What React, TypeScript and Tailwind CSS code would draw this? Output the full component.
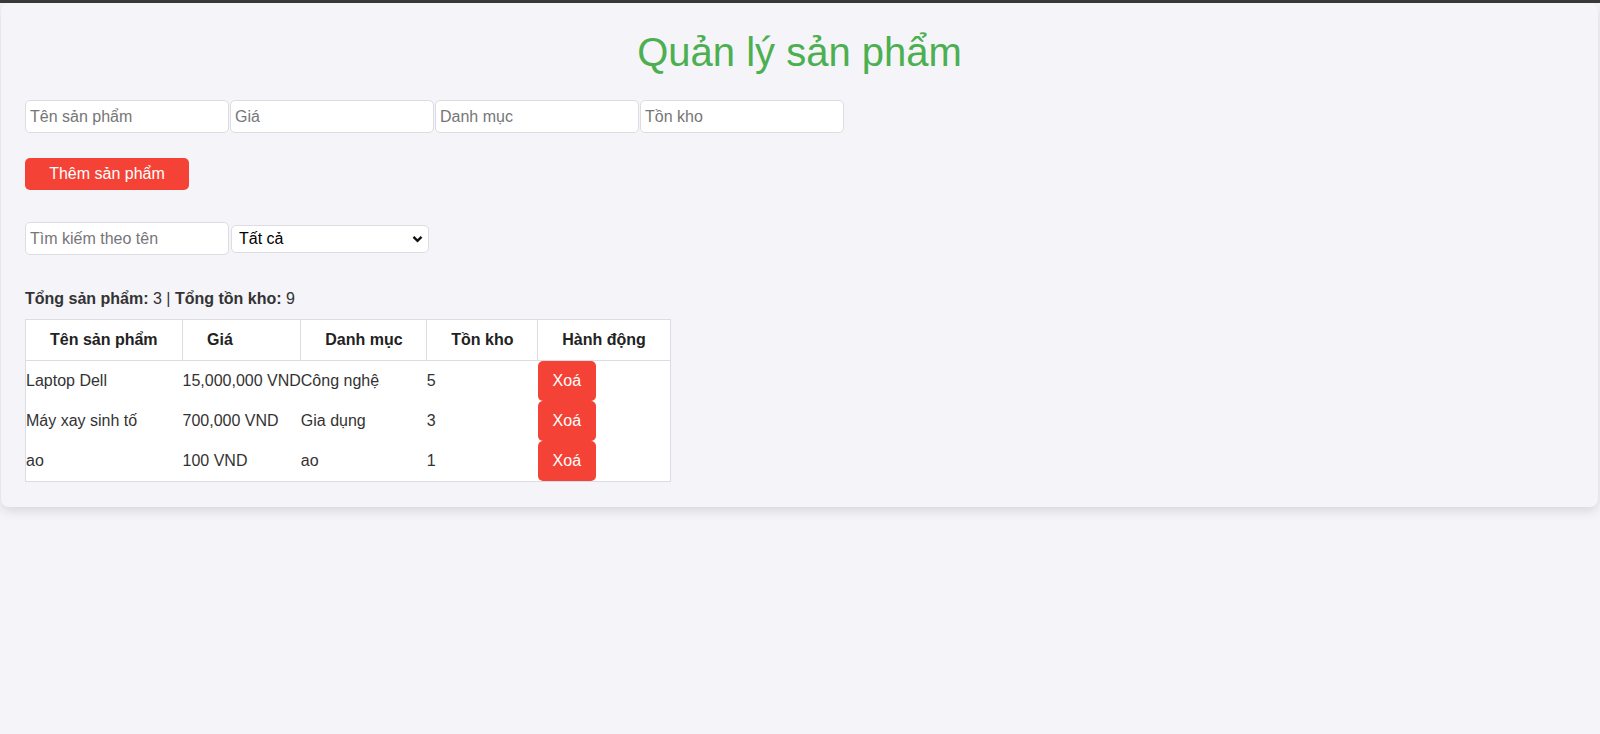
import { useState } from 'react'

interface Product {
  name: string
  price: number
  category: string
  stock: number
}

const initialProducts: Product[] = [
  { name: 'Laptop Dell', price: 15000000, category: 'Công nghệ', stock: 5 },
  { name: 'Máy xay sinh tố', price: 700000, category: 'Gia dụng', stock: 3 },
  { name: 'ao', price: 100, category: 'ao', stock: 1 },
]

const inputCls =
  'h-[33px] w-[204px] rounded-[5px] border border-[#dcdce2] bg-white px-1 text-base text-[#333] outline-none placeholder:text-[#767676]'

export default function App() {
  const [products, setProducts] = useState<Product[]>(initialProducts)
  const totalStock = products.reduce((s, p) => s + p.stock, 0)

  return (
    <div className="min-h-screen bg-[#f4f4f9] font-['Liberation_Sans',Arial,sans-serif] text-[#333]">
      <div className="h-[3px] bg-[#3a3a3a]" />

      {/* khung chính */}
      <div className="ml-px mr-[2px] rounded-lg bg-[#f4f4f9] px-6 pt-[26px] pb-[25px] shadow-[0_4px_12px_rgba(0,0,0,0.12)]">
        <h1 className="text-center text-[40px] leading-[46px] text-[#4caf50]">Quản lý sản phẩm</h1>

        <div className="mt-[25px] flex gap-px">
          <input className={inputCls} placeholder="Tên sản phẩm" />
          <input className={inputCls} placeholder="Giá" />
          <input className={inputCls} placeholder="Danh mục" />
          <input className={inputCls} placeholder="Tồn kho" />
        </div>

        <button className="mt-[25px] h-8 w-[164px] rounded-[5px] bg-[#f44336] text-base text-white">
          Thêm sản phẩm
        </button>

        <div className="mt-8 flex items-center gap-[2px]">
          <input className={inputCls} placeholder="Tìm kiếm theo tên" />
          <div className="relative">
            <select className="h-[28px] w-[198px] appearance-none rounded-[5px] border border-[#dcdce2] bg-white pl-[7px] text-base text-black outline-none">
              <option>Tất cả</option>
              <option>Công nghệ</option>
              <option>Gia dụng</option>
            </select>
            <svg
              className="pointer-events-none absolute right-[6px] top-[10px]"
              width="11"
              height="8"
              viewBox="0 0 11 8"
            >
              <path d="M1.5 1.8 5.5 5.8 9.5 1.8" fill="none" stroke="#111" strokeWidth="2.4" />
            </svg>
          </div>
        </div>

        <p className="mt-[35px] leading-[18px]">
          <b>Tổng sản phẩm:</b> {products.length} | <b>Tổng tồn kho:</b> {totalStock}
        </p>

        <table className="mt-[11px] table-fixed border-collapse border border-[#dcdce2] bg-white">
          <colgroup>
            <col className="w-[157px]" />
            <col className="w-[118px]" />
            <col className="w-[126px]" />
            <col className="w-[111px]" />
            <col className="w-[133px]" />
          </colgroup>
          <thead>
            <tr>
              {['Tên sản phẩm', 'Giá', 'Danh mục', 'Tồn kho', 'Hành động'].map((h) => (
                <th
                  key={h}
                  className="whitespace-nowrap border border-[#dcdce2] pl-6 pr-0 py-[11px] text-left font-bold leading-[18px] text-[#222]"
                >
                  {h}
                </th>
              ))}
            </tr>
          </thead>
          <tbody>
            {products.map((p, i) => (
              <tr key={i}>
                <td className="p-0 whitespace-nowrap">{p.name}</td>
                <td className="p-0 whitespace-nowrap">{p.price.toLocaleString('en-US')} VND</td>
                <td className="p-0 whitespace-nowrap">{p.category}</td>
                <td className="p-0">{p.stock}</td>
                <td className="p-0">
                  <button
                    className="block h-10 w-[58px] rounded-[5px] bg-[#f44336] text-base text-white"
                    onClick={() => setProducts(products.filter((_, j) => j !== i))}
                  >
                    Xoá
                  </button>
                </td>
              </tr>
            ))}
          </tbody>
        </table>
      </div>
    </div>
  )
}
